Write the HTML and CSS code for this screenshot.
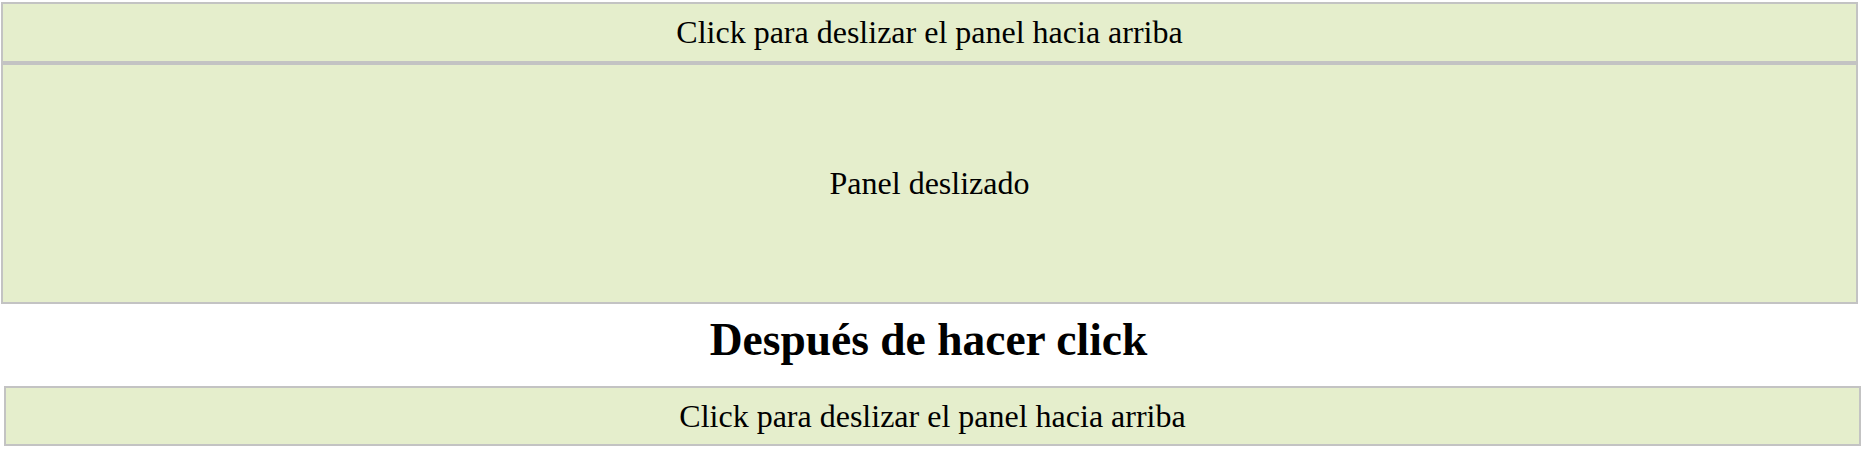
FILE: index.html
```html
<!DOCTYPE html>
<html lang="es">
<head>
<meta charset="utf-8">
<title>Panel deslizante</title>
<link rel="stylesheet" href="styles.css">
</head>
<body>
<div class="page">
  <div class="flip first">Click para deslizar el panel hacia arriba</div>
  <div class="panel">Panel deslizado</div>
  <h2 class="heading">Después de hacer click</h2>
  <div class="flip second">Click para deslizar el panel hacia arriba</div>
</div>
</body>
</html>
```
FILE: styles.css
```css
html, body {
  margin: 0;
  padding: 0;
  background: #ffffff;
}
.page {
  padding-top: 2px;
  font-family: "Liberation Serif", "Times New Roman", serif;
  color: #000;
}
.flip, .panel {
  box-sizing: border-box;
  width: 1857px;
  background-color: #e5eecc;
  border: 2px solid #c3c3c3;
  text-align: center;
  font-size: 32px;
  line-height: 37px;
  padding: 10px;
}
.first {
  margin-left: 1px;
}
.panel {
  margin-left: 1px;
  padding: 100px 10px;
}
.heading {
  width: 1857px;
  margin: 0 0 10px 0;
  text-align: center;
  font-size: 45.5px;
  line-height: 72px;
  font-weight: bold;
}
.second {
  margin-left: 4px;
  height: 60px;
}
```
